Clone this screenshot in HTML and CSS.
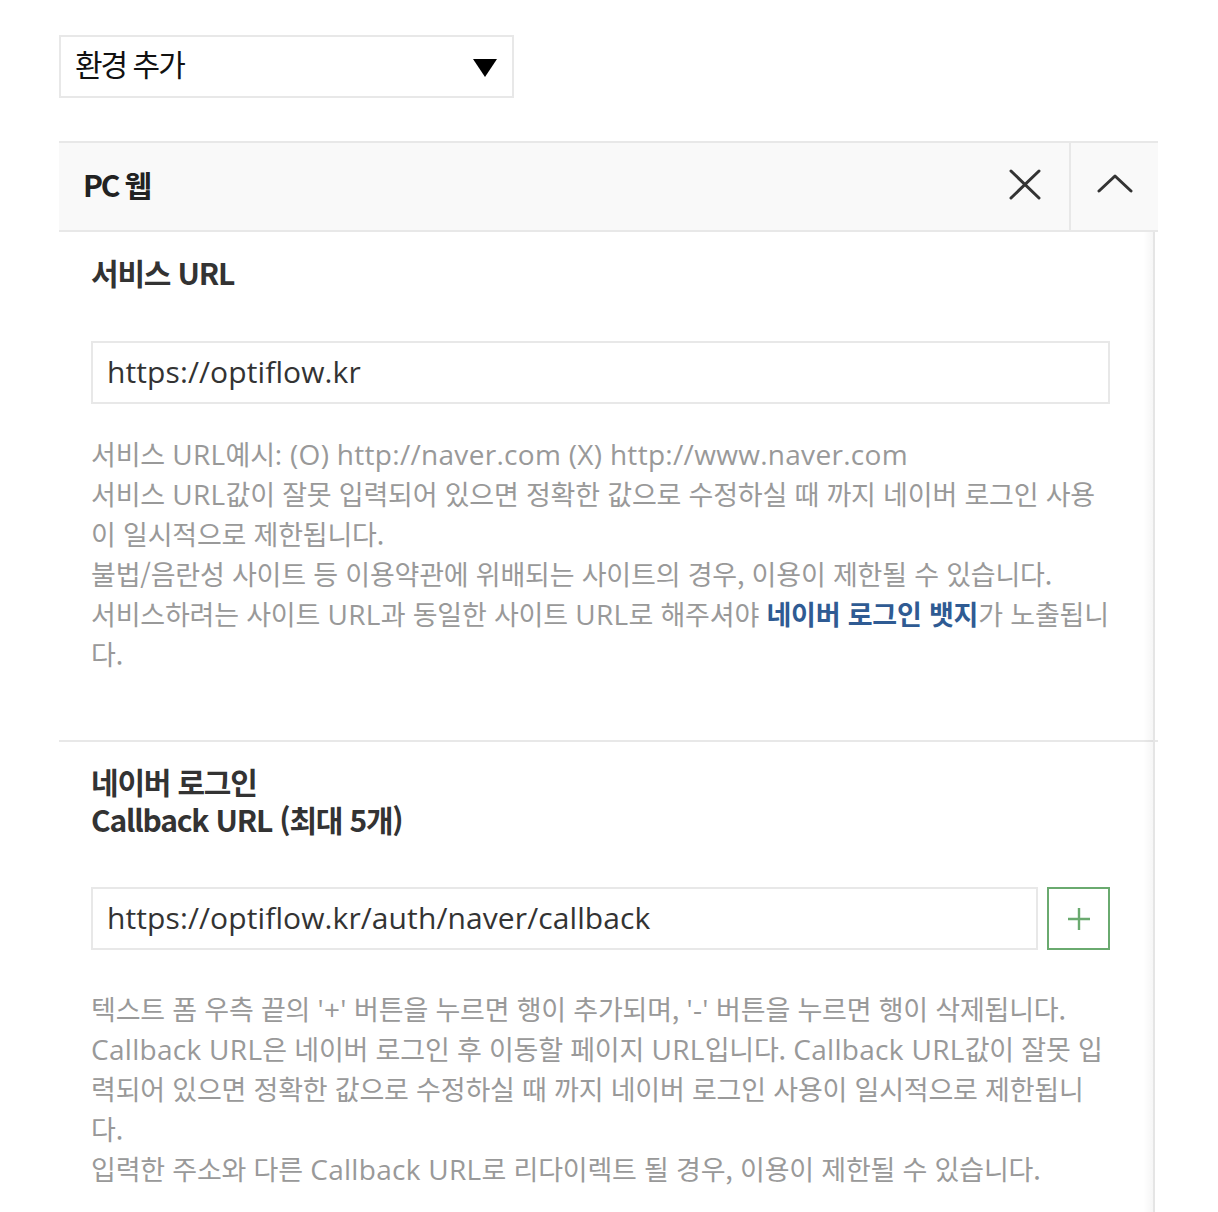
FILE: index.html
```html
<!DOCTYPE html>
<html lang="ko">
<head>
<meta charset="utf-8">
<title>환경 추가</title>
<link rel="stylesheet" href="styles.css">
</head>
<body>
<div class="page">
  <div class="select">
    <span class="select-label">환경 추가</span>
    <svg class="select-caret" width="24" height="18" viewBox="0 0 24 18"><path d="M0 0H24L12 18Z" fill="#000"/></svg>
  </div>

  <div class="panel">
    <div class="panel-head">
      <div class="panel-title">PC 웹</div>
      <button class="icon-btn close-btn" aria-label="삭제">
        <svg width="32" height="31" viewBox="0 0 32 31"><path d="M2 2L30 29M30 2L2 29" stroke="#333" stroke-width="3" stroke-linecap="round" fill="none"/></svg>
      </button>
      <button class="icon-btn toggle-btn" aria-label="접기">
        <svg width="36" height="20" viewBox="0 0 36 20"><path d="M2 18L18 3L34 18" stroke="#333" stroke-width="3" stroke-linecap="round" stroke-linejoin="round" fill="none"/></svg>
      </button>
    </div>
    <div class="panel-body">
      <section class="field field-first">
        <h3 class="field-title"><span class="title-line">서비스 URL</span></h3>
        <div class="input-row">
          <div class="input">https://optiflow.kr</div>
        </div>
        <p class="help">서비스 <span class="en">URL</span>예시<span class="en">: (O) http://naver.com (X) http://www.naver.com</span><br>서비스 <span class="en">URL</span>값이 잘못 입력되어 있으면 정확한 값으로 수정하실 때 까지 네이버 로그인 사용이 일시적으로 제한됩니다.<br>불법/음란성 사이트 등 이용약관에 위배되는 사이트의 경우, 이용이 제한될 수 있습니다.<br>서비스하려는 사이트 <span class="en">URL</span>과 동일한 사이트 <span class="en">URL</span>로 해주셔야 <strong class="em">네이버 로그인 뱃지</strong>가 노출됩니다.</p>
      </section>
      <section class="field field-second">
        <h3 class="field-title"><span class="title-line">네이버 로그인</span><span class="title-line">Callback URL (최대 5개)</span></h3>
        <div class="input-row">
          <div class="input">https://optiflow.kr/auth/naver/callback</div>
          <button class="add-btn" aria-label="추가">
            <svg width="24" height="24" viewBox="0 0 24 24"><path d="M12 1V23M1 12H23" stroke="#6aaa6f" stroke-width="2.4" fill="none"/></svg>
          </button>
        </div>
        <p class="help help-second">텍스트 폼 우측 끝의 <span class="en">'+'</span> 버튼을 누르면 행이 추가되며, <span class="en">'-'</span> 버튼을 누르면 행이 삭제됩니다.<br><span class="en">Callback URL</span>은 네이버 로그인 후 이동할 페이지 <span class="en">URL</span>입니다. <span class="en">Callback URL</span>값이 잘못 입력되어 있으면 정확한 값으로 수정하실 때 까지 네이버 로그인 사용이 일시적으로 제한됩니다.<br>입력한 주소와 다른 <span class="en">Callback URL</span>로 리다이렉트 될 경우, 이용이 제한될 수 있습니다.</p>
      </section>
      <div class="edge" aria-hidden="true"></div>
    </div>
  </div>
</div>
</body>
</html>
```
FILE: styles.css
```css
* { box-sizing: border-box; }
html, body { margin: 0; padding: 0; background: #fff; }
body {
  font-family: "Noto Sans CJK KR", "Noto Sans", sans-serif;
  color: #333;
}
.page {
  padding: 35px 60px 0 59px;
}
.select {
  width: 455px;
  height: 63px;
  border: 2px solid #e8e8e8;
  display: flex;
  align-items: center;
  justify-content: space-between;
  padding: 0 15px 8px 14px;
}
.select-label {
  font-size: 30px;
  letter-spacing: -2px;
  color: #111;
  line-height: 1;
}
.select-caret { display: block; margin-top: 10px; }

.panel {
  margin-top: 43px;
  width: 1099px;
}
.panel-head {
  height: 91px;
  background: #f9f9f9;
  border-top: 2px solid #e8e8e8;
  border-bottom: 2px solid #e8e8e8;
  display: flex;
  align-items: center;
}
.panel-title {
  flex: 1;
  padding-left: 24px;
  padding-bottom: 6px;
  font-size: 30px;
  font-weight: 700;
  letter-spacing: -2.2px;
  color: #222;
}
.icon-btn {
  background: transparent;
  border: 0;
  padding: 0;
  margin: 0;
  height: 100%;
  display: flex;
  align-items: center;
  justify-content: center;
  cursor: pointer;
}
.close-btn { width: 88px; padding-bottom: 4px; }
.toggle-btn {
  width: 89px;
  border-left: 2px solid #e8e8e8;
  padding-bottom: 8px;
}
.panel-body {
  position: relative;
}
.edge {
  position: absolute;
  top: 0;
  bottom: 0;
  right: 3px;
  width: 12px;
  border-right: 2px solid #e5e5e5;
  background: linear-gradient(to right, rgba(0,0,0,0), rgba(0,0,0,0.035));
}
.field { padding: 0 48px 0 32px; }
.field-first {
  padding-top: 21px;
  padding-bottom: 66px;
  border-bottom: 2px solid #e8e8e8;
}
.field-second { padding-top: 20px; padding-bottom: 40px; }
.field-title {
  margin: 0;
  font-size: 30px;
  line-height: 38px;
  font-weight: 700;
  letter-spacing: -1.2px;
  color: #333;
}
.title-line { display: block; height: 38px; }
.field-first .input-row { margin-top: 50px; }
.field-second .input-row { margin-top: 49px; }
.input-row {
  display: flex;
  gap: 9px;
}
.input {
  flex: 1;
  height: 63px;
  border: 2px solid #e8e8e8;
  padding: 0 14px 2px;
  display: flex;
  align-items: center;
  font-family: "Open Sans", "Noto Sans CJK KR", sans-serif;
  font-size: 30px;
  color: #333;
  letter-spacing: 0.1px;
}
.add-btn {
  width: 63px;
  height: 63px;
  flex: none;
  border: 2px solid #6aaa6f;
  background: #fff;
  display: flex;
  align-items: center;
  justify-content: center;
  padding: 0;
}
.help {
  margin: 30px 0 0;
  font-family: "Noto Sans CJK KR", "Open Sans", sans-serif;
  font-size: 27px;
  line-height: 40px;
  color: #999;
  letter-spacing: -0.2px;
  word-break: break-all;
}
.help .en {
  font-family: "Open Sans", "Noto Sans CJK KR", sans-serif;
  font-size: 28px;
  letter-spacing: 0.3px;
}
.help-second { margin-top: 39px; }
.em { color: #2f5b93; font-weight: 700; }
```
